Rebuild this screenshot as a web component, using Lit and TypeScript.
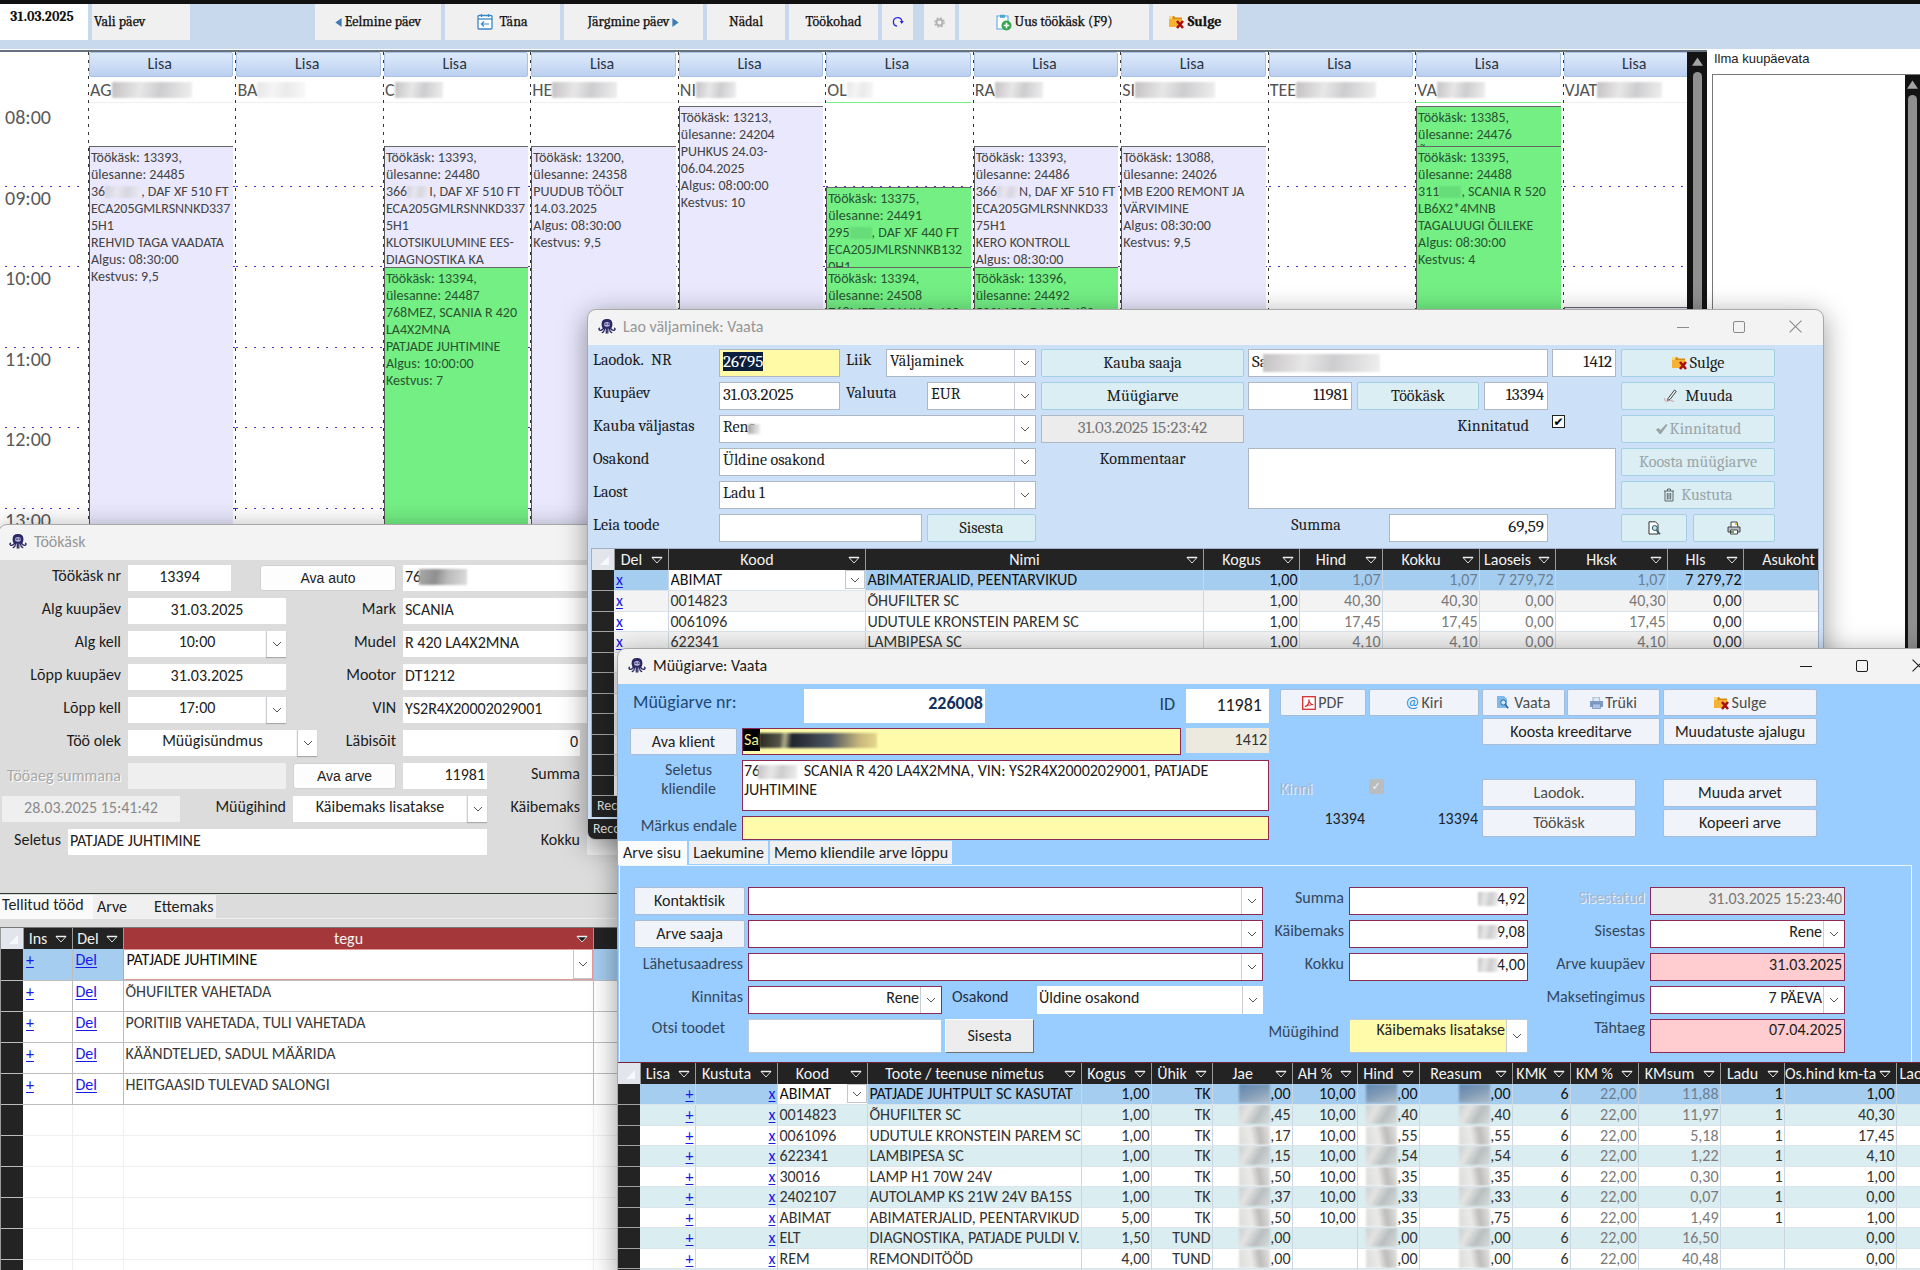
import { LitElement, html, css, nothing } from "lit";
import type { TemplateResult } from "lit";
import { customElement, property } from "lit/decorators.js";
import { classMap } from "lit/directives/class-map.js";

/* ---------- icons ---------- */

const folderClose = html`<svg viewBox="0 0 16 14" width="16" height="14" aria-hidden="true">
  <path d="M0 1h5l1.500 1.500H13V12H0z" fill="#d98a14" />
  <path d="M0 4h13v8H0z" fill="#f6b233" />
  <path d="M0 1h4l-1 3H0z" fill="#fbd777" />
  <path d="M8 6l6 7M14 6l-6 7" stroke="#a80f0f" stroke-width="2.600" />
</svg>`;

const chevron = html`<svg viewBox="0 0 10 6" width="10" height="6" aria-hidden="true">
  <path d="M1 1l4 4 4-4" fill="none" stroke="#555" stroke-width="1" />
</svg>`;

const filterMark = html`<svg viewBox="0 0 12 8" width="12" height="8" aria-hidden="true">
  <path d="M1 1.500h10L6 7z" fill="#1c1c1c" stroke="#dedede" stroke-width="1" />
  <path d="M1 1.500h10" stroke="#efefef" stroke-width="1.500" />
</svg>`;

const cornerMark = html`<svg viewBox="0 0 10 10" width="9" height="9" aria-hidden="true"><path d="M10 0v10H0z" fill="#f7f8fb" /></svg>`;

const calendarToday = html`<svg viewBox="0 0 16 16" width="16" height="16" aria-hidden="true">
  <rect x="1" y="1.500" width="14" height="13.500" rx="1" fill="#fff" stroke="#3b86c6" stroke-width="1.300" />
  <path d="M1 5h14" stroke="#3b86c6" stroke-width="1.300" />
  <path d="M4.500 0v3M11.500 0v3" stroke="#3b86c6" stroke-width="1.200" />
  <path d="M12 10H4.500M7 7.500L4.400 10 7 12.500" fill="none" stroke="#3b86c6" stroke-width="1.200" />
</svg>`;

const refresh = html`<svg viewBox="0 0 12 12" width="12" height="12" aria-hidden="true">
  <path d="M5 10.200A4.300 4.300 0 1 1 9.900 5" fill="none" stroke="#2a2ae0" stroke-width="1.300" />
  <path d="M7.600 5h4.200L9.800 8z" fill="#2a2ae0" />
</svg>`;

const gear = html`<svg viewBox="0 0 12 12" width="11" height="11" aria-hidden="true">
  <circle cx="6" cy="6" r="3.300" fill="none" stroke="#b3b3b3" stroke-width="2" />
  <circle cx="6" cy="6" r="5" fill="none" stroke="#b3b3b3" stroke-width="1.600" stroke-dasharray="2 1.930" />
</svg>`;

const clipboardAdd = html`<svg viewBox="0 0 16 17" width="16" height="17" aria-hidden="true">
  <rect x="1" y="2" width="11" height="13" fill="#fff" stroke="#4ba3d9" />
  <path d="M4 .800h5v3H4z" fill="#4ba3d9" />
  <circle cx="10.500" cy="11.500" r="5" fill="#33a64a" />
  <path d="M10.500 8.700v5.600M7.700 11.500h5.600" stroke="#fff" stroke-width="1.700" />
</svg>`;

const arrowLeft = html`<svg viewBox="0 0 7 10" width="7" height="9" aria-hidden="true"><path d="M7 0v10L0 5z" fill="#3f7cb5" /></svg>`;
const arrowRight = html`<svg viewBox="0 0 7 10" width="7" height="9" aria-hidden="true"><path d="M0 0v10l7-5z" fill="#3f7cb5" /></svg>`;

const scrollUp = html`<svg viewBox="0 0 12 9" width="11" height="9" aria-hidden="true"><path d="M6 0l6 9H0z" fill="#a5a5a5" /></svg>`;

const pencil = html`<svg viewBox="0 0 16 14" width="16" height="14" aria-hidden="true">
  <path d="M5 9.500L11.500 1l1.800 1.300L7 10.500l-2.500 1z" fill="#e9eef0" stroke="#444" stroke-width="1" />
  <path d="M2 9c-1.500 2.500 1 3.800 3 3s3-.5 6 .5" fill="none" stroke="#c89aa0" stroke-width="1" />
</svg>`;

const tickGray = html`<svg viewBox="0 0 14 12" width="13" height="12" aria-hidden="true"><path d="M1 6.500L4 4.800 6 7 12 .600l1.500 1L6.500 11.500H4.800z" fill="#9aa5a8" /></svg>`;

const bin = html`<svg viewBox="0 0 12 14" width="12" height="14" aria-hidden="true">
  <path d="M1 3h10M4.500 3V1h3v2M2 3v10h8V3M4.300 5v6.500M6 5v6.500M7.700 5v6.500" fill="none" stroke="#5d6669" stroke-width="1" />
</svg>`;

const preview = html`<svg viewBox="0 0 13 14" width="13" height="14" aria-hidden="true">
  <path d="M1 .800h6.500L10 3.300V13H1z" fill="#fff" stroke="#333" />
  <circle cx="6.800" cy="7" r="2.500" fill="#bfe3ec" stroke="#2d5560" />
  <path d="M8.500 9.200l3.500 4" stroke="#2d5560" stroke-width="1.600" />
</svg>`;

const printer = html`<svg viewBox="0 0 14 14" width="14" height="14" aria-hidden="true">
  <path d="M4 6V1h6l1 5" fill="#fff" stroke="#444" />
  <path d="M1 6h12v5H1z" fill="#b9bfc2" stroke="#444" />
  <path d="M3.500 9h7v4h-7z" fill="#fff" stroke="#444" />
  <path d="M8 2h2v2H8z" fill="#d9c23a" /><path d="M4 10h3v2H4z" fill="#57a957" />
</svg>`;

const pdf = html`<svg viewBox="0 0 14 14" width="14" height="14" aria-hidden="true">
  <rect x=".700" y=".700" width="12.600" height="12.600" fill="#fff" stroke="#d32f2f" stroke-width="1.300" />
  <path d="M3 10.800c2.500-1.300 4.200-4.600 4-7.600 0 3 1.600 5 4.200 5.600-3-.3-5.700.3-8.200 2z" fill="none" stroke="#d32f2f" stroke-width="1.100" />
</svg>`;

const docFind = html`<svg viewBox="0 0 12 13" width="12" height="13" aria-hidden="true">
  <path d="M0 0h7l3 3v9H0z" fill="#7db9ec" />
  <circle cx="6.300" cy="6.500" r="2.600" fill="#cfe7fa" stroke="#2f6699" />
  <path d="M8.200 8.500l3 3.800" stroke="#2f6699" stroke-width="1.500" />
</svg>`;

const printerBlue = html`<svg viewBox="0 0 13 12" width="13" height="12" aria-hidden="true">
  <path d="M3 4V0h6l1 4" fill="#dfeaf5" stroke="#8aa0bb" stroke-width=".8" />
  <path d="M0 4h13v6H0z" fill="#7e9ac4" /><path d="M2.500 7h8v4.500h-8z" fill="#a8c3e6" stroke="#6d8ab2" stroke-width=".7" />
</svg>`;

const octopus = html`<svg viewBox="0 0 20 16" width="18" height="15" aria-hidden="true">
  <path d="M10 .5c3.400 0 5.300 2.300 5.300 5.200 0 2-.9 3.400-1.600 4.300 1.400 1.700 2.400 2.600 3.900 2.300M10 .500C6.600.500 4.700 2.800 4.700 5.700c0 2 .9 3.400 1.600 4.300-1.400 1.700-2.400 2.600-3.900 2.300" fill="none" stroke="#26235f" stroke-width="1.500" />
  <path d="M10 .5c3.400 0 5.300 2.300 5.300 5.200 0 2.200-1.100 3.900-2.200 4.800H6.900C5.800 9.600 4.700 7.900 4.700 5.700 4.700 2.800 6.600.500 10 .500z" fill="#2c2968" />
  <path d="M7 4.200c1.800-1.500 4.200-1.500 6 0v3.300c-2 1-4 1-6 0z" fill="#b9b8da" />
  <path d="M8 5.400h1.700M10.800 5.400h1.700" stroke="#26235f" stroke-width="1.400" />
  <path d="M2.600 12.300C1 12.300.600 10.600 1.600 9.900M17.400 12.300c1.600 0 2-1.700 1-2.400M7.300 10.500c-.2 2.200-1 3.700-2.600 4.300M9.200 10.500v4.800M10.900 10.500v4.800M12.700 10.500c.2 2.200 1 3.700 2.600 4.300" fill="none" stroke="#26235f" stroke-width="1.400" stroke-linecap="round" />
</svg>`;

/* ---------- shared styles ---------- */

const base = css`
  * { box-sizing: border-box; }
  :host {
    display: block;
    font-family: Calibri, Carlito, "Liberation Sans", sans-serif;
    font-size: 16px;
    line-height: 20px;
    color: #222;
  }
  button, input, select, textarea { font: inherit; color: inherit; margin: 0; border-radius: 0; min-width: 0; }
  button {
    display: flex; align-items: center; justify-content: center; gap: 2px;
    padding: 0; white-space: nowrap;
  }
  input, textarea { border: 0; background: #fff; padding: 0 2px 4px; outline: 0; width: 100%; height: 100%; }
  textarea { display: block; resize: none; overflow: hidden; }
  label { white-space: nowrap; }
  .right, .right select { text-align: right; text-align-last: right; }
  .center, .center select { text-align: center; text-align-last: center; }
  .combo { display: grid; grid-template: 100% / minmax(0, 1fr) 21px; background: #fff; }
  .combo select {
    grid-area: 1 / 1 / 2 / 3; appearance: none; border: 0; background: transparent;
    width: 100%; height: 100%; padding: 0 22px 4px 2px; outline: 0;
  }
  .combo .drop {
    grid-area: 1 / 2; display: grid; place-items: center; pointer-events: none;
    border-left: 1px solid #c9ced4; background: #fff;
  }
  .masked { display: grid; grid-template: 100% / 100%; }
  .masked > * { grid-area: 1 / 1; }
  .smudge {
    display: inline-block; height: 16px; filter: blur(1px);
    background: linear-gradient(100deg, #c4c1c3, #e8e7e8 35%, #cdccce 60%, #efeff0);
  }
  table { border-collapse: collapse; table-layout: fixed; background: #fff; }
  th, td { padding: 0; overflow: hidden; white-space: nowrap; }
  th { height: 21px; background: #232323; color: #f2f2f2; font-weight: 400; border-right: 1px solid #9a9a9a; }
  .hc { display: flex; align-items: center; height: 20px; gap: 2px; padding-right: 5px; overflow: hidden; }
  .hc span { flex: 1; min-width: 0; text-align: center; overflow: hidden; }
  .hc.start span { text-align: left; padding-left: 3px; }
  .hc svg { flex: none; }
  th.corner { background: #e3e5ec; text-align: right; vertical-align: bottom; line-height: 10px; }
  td.sel { background: #232323; border-bottom: 1px solid #a2a2a2; }
  a { color: #1a1ae6; text-decoration: underline; text-underline-offset: 2px; }
  svg { display: block; flex: none; }
`;

const smudge = (cls: string) => html`<span class="smudge ${cls}"></span>`;

const combo = (id: string, value: string, cls = "") => html`
  <span class="combo ${cls}"><select id=${id} aria-label=${id}><option>${value}</option></select><span class="drop">${chevron}</span></span>`;

/* ---------- window frame ---------- */

@customElement("app-window")
export class AppWindow extends LitElement {
  @property() heading = "";
  @property({ type: Boolean, reflect: true }) active = false;

  static styles = [base, css`
    :host {
      background: #f3f3f3; border: 1px solid #a9a9a9; border-radius: 9px 9px 8px 8px; overflow: hidden;
      box-shadow: 0 6px 28px rgba(0, 0, 0, 0.4);
    }
    header { display: flex; align-items: center; height: 35px; padding: 0 0 2px 10px; color: #969696; }
    :host([active]) header { color: #1c1c1c; }
    h2 { flex: 1; margin: 0 0 0 7px; font-size: 16px; font-weight: 400; }
    header button { width: 56px; height: 33px; border: 0; background: transparent; }
    .ctl path, .ctl rect { stroke: #8a8a8a; fill: none; }
    :host([active]) .ctl path, :host([active]) .ctl rect { stroke: #1c1c1c; }
  `];

  render() {
    return html`
      <header>
        ${octopus}
        <h2>${this.heading}</h2>
        <button class="ctl" aria-label="Minimeeri"><svg viewBox="0 0 12 12" width="12" height="12"><path d="M0 6.500h12" /></svg></button>
        <button class="ctl" aria-label="Maksimeeri"><svg viewBox="0 0 12 12" width="12" height="12"><rect x=".5" y=".5" width="11" height="11" rx="1.500" /></svg></button>
        <button class="ctl" aria-label="Sulge aken"><svg viewBox="0 0 12 12" width="13" height="13"><path d="M.5.500l11 11M11.500.500l-11 11" /></svg></button>
      </header>
      <slot></slot>`;
  }
}

/* ---------- schedule ---------- */

interface Task { start: number; span: number; green?: boolean; lines: (string | TemplateResult)[]; }
interface Worker { name: string; mask: string; tail?: boolean; tasks: Task[]; }

const workers: Worker[] = [
  { name: "AG", mask: "m80", tasks: [{ start: 2, span: 12, lines: ["Töökäsk: 13393,", "ülesanne: 24485", html`36${smudge("plate")}, DAF XF 510 FT`, "ECA205GMLRSNNKD337", "5H1", "REHVID TAGA VAADATA", "Algus: 08:30:00", "Kestvus: 9,5"] }] },
  { name: "BA", mask: "m50 faint", tasks: [] },
  { name: "C", mask: "m50", tasks: [
    { start: 2, span: 3, lines: ["Töökäsk: 13393,", "ülesanne: 24480", html`366${smudge("plate short")}I, DAF XF 510 FT`, "ECA205GMLRSNNKD337", "5H1", "KLOTSIKULUMINE EES-", "DIAGNOSTIKA KA"] },
    { start: 5, span: 9, green: true, lines: ["Töökäsk: 13394,", "ülesanne: 24487", "768MEZ, SCANIA R 420", "LA4X2MNA", "PATJADE JUHTIMINE", "Algus: 10:00:00", "Kestvus: 7"] }] },
  { name: "HE", mask: "m65", tasks: [{ start: 2, span: 12, lines: ["Töökäsk: 13200,", "ülesanne: 24358", "PUUDUB TÖÖLT", "14.03.2025", "Algus: 08:30:00", "Kestvus: 9,5"] }] },
  { name: "NI", mask: "m40", tasks: [{ start: 1, span: 13, lines: ["Töökäsk: 13213,", "ülesanne: 24204", "PUHKUS 24.03-", "06.04.2025", "Algus: 08:00:00", "Kestvus: 10"] }] },
  { name: "OL", mask: "m25 faint", tail: true, tasks: [
    { start: 3, span: 2, green: true, lines: ["Töökäsk: 13375,", "ülesanne: 24491", html`295${smudge("plate short lime")}, DAF XF 440 FT`, "ECA205JMLRSNNKB132", "0H1"] },
    { start: 5, span: 9, green: true, lines: ["Töökäsk: 13394,", "ülesanne: 24508", "768MEZ, SCANIA R 420"] }] },
  { name: "RA", mask: "m50", tasks: [
    { start: 2, span: 3, lines: ["Töökäsk: 13393,", "ülesanne: 24486", html`366${smudge("plate short")}N, DAF XF 510 FT`, "ECA205GMLRSNNKD33", "75H1", "KERO KONTROLL", "Algus: 08:30:00"] },
    { start: 5, span: 9, green: true, lines: ["Töökäsk: 13396,", "ülesanne: 24492", "523MGP, DAF XF 480"] }] },
  { name: "SI", mask: "m80", tasks: [{ start: 2, span: 12, lines: ["Töökäsk: 13088,", "ülesanne: 24026", "MB E200 REMONT JA", "VÄRVIMINE", "Algus: 08:30:00", "Kestvus: 9,5"] }] },
  { name: "TEE", mask: "m80", tasks: [] },
  { name: "VA", mask: "m50", tail: true, tasks: [
    { start: 1, span: 1, green: true, lines: ["Töökäsk: 13385,", "ülesanne: 24476", "Õ"] },
    { start: 2, span: 8, green: true, lines: ["Töökäsk: 13395,", "ülesanne: 24488", html`311${smudge("plate short lime")}, SCANIA R 520`, "LB6X2*4MNB", "TAGALUUGI ÕLILEKE", "Algus: 08:30:00", "Kestvus: 4"] }] },
  { name: "VJAT", mask: "m65", tasks: [{ start: 6, span: 4, lines: [] }] },
];

@customElement("schedule-board")
export class ScheduleBoard extends LitElement {
  static styles = [base, css`
    :host { display: flex; flex-direction: column; height: 100%; background: #fff; }
    .strip { height: 4px; background: #111; }
    .bar {
      display: flex; height: 45px; background: #c8d9ee; padding-bottom: 9px; gap: 4px;
      font-family: Cambria, Caladea, "Liberation Serif", serif; font-size: 14px; color: #111;
    }
    .bar button { border: 0; background: #f0f0f0; gap: 3px; -webkit-text-stroke: 0.25px #111; }
    .date { width: 88px; background: #fff; text-align: center; font-weight: 700; padding: 0 4px 12px 0; }
    .w98 { width: 98px; } .w126 { width: 126px; } .w115 { width: 115px; } .w139 { width: 139px; }
    .w78 { width: 78px; } .w89 { width: 89px; } .w31 { width: 31px; } .w190 { width: 190px; } .w84 { width: 84px; }
    .bar .w98 { justify-content: flex-start; padding-left: 2px; }
    .bar .w126 { margin-left: 121px; }
    .bar .w115 { gap: 6px; }
    .bar .set { margin-left: 7px; }
    .bar .strong { font-weight: 700; }
    .main { flex: 1; display: flex; min-height: 0; }
    .cal { flex: 1; min-width: 0; display: flex; overflow: hidden; border-top: 2px solid #66727f; margin-top: 1px; }
    .hours {
      flex: none; width: 88px; padding: 54px 4px 0 5px; font-size: 20px; color: #5a5a5a;
      display: grid; grid-template-rows: repeat(3, 81px 80px); align-content: start; line-height: 22px;
    }
    .hours div, .slots {
      background: repeating-linear-gradient(90deg, #4434cc 0 2px, transparent 2px 9px) 0 100% / 100% 1px no-repeat;
    }
    .view { flex: 1; min-width: 0; overflow: hidden; }
    .cols { width: calc(100% + 23px); height: 100%; display: grid; grid-template-columns: repeat(11, 1fr); }
    .col {
      min-width: 0; display: flex; flex-direction: column; padding-left: 1px;
      background: repeating-linear-gradient(180deg, #333 0 3px, transparent 3px 8px) 0 0 / 1px 100% no-repeat;
    }
    .col > button {
      height: 25px; margin-right: 2px; border: 1px solid #a9c2e4; border-radius: 2px; color: #2b3542;
      background: linear-gradient(#dce9fb, #cfdff6 45%, #bacff0); padding: 0 3px 2px 0;
    }
    .name { height: 25px; font-size: 18px; line-height: 26px; color: #555; display: flex; align-items: center; padding-left: 1px; }
    .tail { height: 4px; margin-right: 2px; border-top: 1px solid #eee; }
    .tail.on { border-top-color: #73ef84; }
    .grid { display: grid; grid-template-rows: repeat(3, 40px 41px 40px 40px); margin-right: 2px; flex: 1; }
    .slots { grid-column: 1; height: 1px; align-self: end; margin-right: -2px; }
    .task {
      grid-column: 1; border-left: 1px solid #555; border-top: 1px solid #666; background: #e9e8fd; padding: 2px 0 0 1px;
      font-size: 14px; line-height: 17px; color: #444; overflow: hidden; min-height: 0; white-space: nowrap;
    }
    .task.green { background: #73ef84; color: #2a5531; }
    .plate { width: 36px; height: 12px; vertical-align: -2px; opacity: 0.6; }
    .short { width: 22px; }
    .lime { background: #5fd272; }
    .faint { opacity: 0.4; }
    .m80 { width: 80px; } .m65 { width: 65px; } .m50 { width: 48px; } .m40 { width: 40px; } .m25 { width: 26px; }
    .scroll { width: 20px; background: #131313; display: flex; flex-direction: column; align-items: center; gap: 6px; padding-top: 5px; }
    .thumb { flex: 1; width: 9px; border-radius: 5px 5px 0 0; background: #909090; }
    aside { width: 213px; display: flex; flex-direction: column; padding-left: 5px; }
    aside h3 { margin: 0; padding-left: 2px; height: 25px; font: 13px/20px "Liberation Sans", Arial, sans-serif; color: #222; }
    .list { flex: 1; display: flex; justify-content: flex-end; border-left: 1px solid #777; border-top: 1px solid #777; }
    .list .scroll { width: 15px; }
  `];

  private worker(w: Worker) {
    return html`<section class="col">
      <button>Lisa</button>
      <div class="name">${w.name}${smudge(w.mask)}</div>
      <div class=${classMap({ tail: true, on: !!w.tail })}></div>
      <div class="grid">
        ${[2, 4, 6, 8, 10].map((row) => html`<div class="slots" style="grid-row:${row}"></div>`)}
        ${w.tasks.map((t) => html`<article class=${classMap({ task: true, green: !!t.green })}
          style="grid-row:${t.start} / span ${Math.min(t.span, 13 - t.start)}">
          ${t.lines.map((l) => html`<div>${l}</div>`)}
        </article>`)}
      </div>
    </section>`;
  }

  render() {
    return html`
      <div class="strip"></div>
      <nav class="bar">
        <input class="date" aria-label="Kuupäev" .value=${"31.03.2025"} />
        <button class="w98">Vali päev</button>
        <button class="w126">${arrowLeft}Eelmine päev</button>
        <button class="w115">${calendarToday}Täna</button>
        <button class="w139">Järgmine päev${arrowRight}</button>
        <button class="w78">Nädal</button>
        <button class="w89">Töökohad</button>
        <button class="w31" aria-label="Värskenda">${refresh}</button>
        <button class="w31 set" aria-label="Seaded">${gear}</button>
        <button class="w190">${clipboardAdd}Uus töökäsk (F9)</button>
        <button class="w84 strong">${folderClose}Sulge</button>
      </nav>
      <div class="main">
        <div class="cal">
          <div class="hours">${["08:00", "09:00", "10:00", "11:00", "12:00", "13:00"].map((h) => html`<div>${h}</div>`)}</div>
          <div class="view"><div class="cols">${workers.map((w) => this.worker(w))}</div></div>
          <div class="scroll">${scrollUp}<div class="thumb"></div></div>
        </div>
        <aside>
          <h3>Ilma kuupäevata</h3>
          <div class="list"><div class="scroll">${scrollUp}<div class="thumb"></div></div></div>
        </aside>
      </div>`;
  }
}

/* ---------- data grid ---------- */

interface Column {
  title: string; width: number; align?: "right"; dim?: boolean; link?: boolean; mask?: boolean;
  pick?: boolean; accent?: boolean; plain?: boolean; start?: boolean;
}

@customElement("data-grid")
export class DataGrid extends LitElement {
  @property({ attribute: false }) columns: Column[] = [];
  @property({ attribute: false }) rows: string[][] = [];
  @property({ type: Number }) blanks = 0;
  @property() tone = "";

  static styles = [base, css`
    :host { background: #fff; overflow: hidden; }
    tr.odd { height: 20px; } tr.even { height: 21px; }
    td { border-right: 1px solid #ccd6e2; line-height: 19px; padding: 0 1px 0 2px; color: #333; border-bottom: 1px solid #dde3ea; }
    td.sel { border-right: 0; }
    td.r { text-align: right; }
    td.dim { color: #7a7a7a; }
    .gray tr.even td:not(.sel) { background: #f3f3f3; }
    .aqua tr.even td:not(.sel) { background: #daedf1; }
    tr.cur td:not(.sel) { background: #a5cdf0; color: #111; }
    tr.cur td.dim:not(.sel) { color: #6b7f93; }
    tr td.pick.pick { padding: 0; }
    tr.cur td.pick.pick { background: #fff; }
    td.pick > span.t { padding-left: 2px; }
    .combo { height: 19px; grid-template-columns: minmax(0, 1fr) 20px; }
    .combo select { padding: 0 20px 0 2px; }
    .combo .drop { border: 1px solid #c4c8cc; }
    .smudge { width: 31px; height: 19px; vertical-align: top; background: linear-gradient(120deg, #c9cfd2, #e4e4e2 30%, #b9bfc0 60%, #d8dcdc); }
    tr.odd .smudge { background: linear-gradient(80deg, #dcdcdb, #eaeae8 40%, #bdbcbb 65%, #e4e4e3); }
    tr.cur.odd .smudge { background: linear-gradient(160deg, #5f86b3, #7e99b5 45%, #b3c0cb); }
    .tall tr.odd, .tall tr.even { height: 31px; }
    .tall td { vertical-align: top; line-height: 22px; border-color: #bdbdbd; padding-left: 3px; color: #3a3a3a; }
    .tall tr.blank td:not(.sel) { border-color: #efefef; }
    .tall th.accent { background: #a4373a; }
    .tall tr.cur td.pick { outline: 1px solid #e59a9a; outline-offset: -1px; }
    .tall .combo { height: 30px; }
    .tall .combo select { padding: 0 20px 8px 3px; }
  `];

  private cell(c: Column, v: string, current: boolean) {
    const cls = classMap({ r: c.align === "right", dim: !!c.dim, pick: !!c.pick });
    if (c.link) return html`<td class=${cls}><a href="#">${v}</a></td>`;
    if (c.pick && current) return html`<td class=${cls}>${combo(c.title, v)}</td>`;
    if (c.mask) return html`<td class=${cls}>${smudge("")}${v}</td>`;
    return html`<td class=${cls}>${c.pick ? html`<span class="t">${v}</span>` : v}</td>`;
  }

  render() {
    const total = this.columns.reduce((s, c) => s + c.width, 22);
    const blanks = Array.from({ length: this.blanks }, (_, i) => i + this.rows.length);
    const parity = (i: number) => (i % 2 ? "even" : "odd");
    return html`<table class=${this.tone} style="width:${total}px">
      <colgroup><col style="width:22px" />${this.columns.map((c) => html`<col style="width:${c.width}px" />`)}</colgroup>
      <thead><tr><th class="corner"><div class="hc"><span></span>${cornerMark}</div></th>${this.columns.map((c) => html`
        <th class=${c.accent ? "accent" : ""}><div class="hc ${c.start ? "start" : ""}"><span>${c.title}</span>${c.plain ? nothing : filterMark}</div></th>`)}</tr></thead>
      <tbody>
        ${this.rows.map((r, i) => html`<tr class="${parity(i)} ${i === 0 ? "cur" : ""}"><td class="sel"></td>${this.columns.map((c, k) => this.cell(c, r[k] ?? "", i === 0))}</tr>`)}
        ${blanks.map((i) => html`<tr class="${parity(i)} blank"><td class="sel"></td>${this.columns.map(() => html`<td></td>`)}</tr>`)}
      </tbody>
    </table>`;
  }
}

/* ---------- work order ---------- */

@customElement("work-order")
export class WorkOrder extends LitElement {
  static styles = [base, css`
    :host { background: #dcdcdc; height: 100%; }
    .form { width: 700px; padding: 5px 0 0; display: flex; flex-direction: column; gap: 7px; }
    .row { display: flex; height: 26px; gap: 7px; }
    .row > label { line-height: 22px; color: #1c1c1c; text-align: right; }
    .lead { width: 122px; }
    .push { margin-left: auto; }
    .row > input, .row > .combo, .row > .masked, .row > button { flex: none; }
    .w103 { width: 103px; } .w158 { width: 158px; } .w189 { width: 189px; } .w136 { width: 136px; }
    .w296 { width: 296px; } .w177 { width: 177px; } .w84 { width: 84px; } .w112 { width: 112px; }
    .w178 { width: 178px; } .w194 { width: 194px; } .w419 { width: 419px; } .w86 { width: 86px; }
    .combo { grid-template-columns: minmax(0, 1fr) 20px; }
    .combo .drop { box-shadow: 0 1px 1px #aaa; }
    button { background: #fdfdfd; border: 1px solid #d0d0d0; border-radius: 3px; font: 14px/20px "Liberation Sans", Arial, sans-serif; }
    .off { background: #efefef; color: #8a8a8a; }
    .row > label.emboss { color: #a8a8a8; text-shadow: 1px 1px 0 #fff; line-height: 26px; }
    .pad { margin-right: 119px; }
    .start { padding-left: 3px; }
    .seletus { width: 62px; }
    .plate { width: 48px; margin: 4px 0 0 16px; background: linear-gradient(100deg, #aaa, #8f8f8f 35%, #bbb 60%, #ddd); }
    .tabs { margin-top: 38px; border-top: 1px solid #2e3a2e; padding-top: 1px; display: flex; height: 26px; border-bottom: 1px solid #eee; }
    .tabs button { border: 0; border-radius: 0; background: #f0f0f0; justify-content: flex-start; font: inherit; height: 24px; padding-left: 4px; }
    .tabs .on { background: #fafafa; padding: 0 0 4px 3px; width: 94px; }
    .tabs .t2 { width: 56px; } .tabs .t3 { width: 67px; padding-left: 5px; }
    data-grid { margin: 8px 0 0; border-left: 2px solid #9a9a9a; border-top: 1px solid #777; }
  `];

  private columns: Column[] = [
    { title: "Ins", width: 49, link: true }, { title: "Del", width: 51, link: true },
    { title: "tegu", width: 470, accent: true, pick: true }, { title: "", width: 400, plain: true },
  ];
  private rows = ["PATJADE JUHTIMINE", "ÕHUFILTER VAHETADA", "PORITIIB VAHETADA, TULI VAHETADA", "KÄÄNDTELJED, SADUL MÄÄRIDA", "HEITGAASID TULEVAD SALONGI"].map((t) => ["+", "Del", t, ""]);

  render() {
    return html`
      <form class="form">
        <div class="row"><label class="lead" for="nr">Töökäsk nr</label><input id="nr" class="w103 center" .value=${"13394"} />
          <button type="button" class="w136 push">Ava auto</button><span class="masked w296"><input aria-label="Auto" .value=${"76"} />${smudge("plate")}</span></div>
        <div class="row"><label class="lead" for="d1">Alg kuupäev</label><input id="d1" class="w158 center" .value=${"31.03.2025"} />
          <label class="push" for="mark">Mark</label><input id="mark" class="w296" .value=${"SCANIA"} /></div>
        <div class="row"><label class="lead" for="t1">Alg kell</label>${combo("t1", "10:00", "w158 center")}
          <label class="push" for="mudel">Mudel</label><input id="mudel" class="w296" .value=${"R 420 LA4X2MNA"} /></div>
        <div class="row"><label class="lead" for="d2">Lõpp kuupäev</label><input id="d2" class="w158 center" .value=${"31.03.2025"} />
          <label class="push" for="mootor">Mootor</label><input id="mootor" class="w296" .value=${"DT1212"} /></div>
        <div class="row"><label class="lead" for="t2">Lõpp kell</label>${combo("t2", "17:00", "w158 center")}
          <label class="push" for="vin">VIN</label><input id="vin" class="w296" .value=${"YS2R4X20002029001"} /></div>
        <div class="row"><label class="lead" for="olek">Töö olek</label>${combo("olek", "Müügisündmus", "w189 center")}
          <label class="push" for="km">Läbisõit</label><input id="km" class="w177 right pad" .value=${"0"} /></div>
        <div class="row"><label class="lead emboss" for="aeg">Tööaeg summana</label><input id="aeg" class="w158 off" disabled />
          <button type="button" class="w103">Ava arve</button><input class="w84 right" aria-label="Arve" .value=${"11981"} />
          <label class="w86" for="summa">Summa</label><input id="summa" class="w112 off" disabled /></div>
        <div class="row start"><input class="w178 off center" aria-label="Sisestatud" disabled .value=${"28.03.2025 15:41:42"} />
          <label class="push" for="hind">Müügihind</label>${combo("hind", "Käibemaks lisatakse", "w194 center")}
          <label class="w86" for="kaibe">Käibemaks</label><input id="kaibe" class="w112 off" disabled /></div>
        <div class="row"><label class="seletus" for="sel">Seletus</label><input id="sel" class="w419" .value=${"PATJADE JUHTIMINE"} />
          <label class="w86" for="kokku">Kokku</label><input id="kokku" class="w112 off" disabled /></div>
      </form>
      <div class="tabs" role="tablist"><button class="on" role="tab">Tellitud tööd</button><button class="t2" role="tab">Arve</button><button class="t3" role="tab">Ettemaks</button></div>
      <data-grid tone="tall" .columns=${this.columns} .rows=${this.rows} .blanks=${7}></data-grid>`;
  }
}

/* ---------- stock issue ---------- */

@customElement("stock-issue")
export class StockIssue extends LitElement {
  static styles = [base, css`
    :host { background: #cce0f8; }
    .form {
      display: flex; gap: 5px; padding: 4px 0 6px 5px; color: #1a1a1a;
      font-family: Cambria, Caladea, "Liberation Serif", serif;
    }
    .a { width: 443px; display: flex; flex-direction: column; gap: 5px; }
    .row { display: flex; height: 28px; gap: 5px; }
    .row > label { line-height: 22px; }
    .lead { width: 121px; }
    .row > label.mid { flex: 1; padding-left: 1px; text-align: left; }
    input, textarea, .combo { border: 1px solid #aeb8c4; }
    input, .combo select { padding: 0 3px 4px 3px; }
    .combo select { padding-right: 22px; }
    input { font-size: 17px; }
    .w121 { width: 121px; } .w150 { width: 150px; } .w109 { width: 109px; }
    .row > input, .row > .combo { flex: none; } .row > .fill { flex: 1; }
    .fill { flex: 1; min-width: 0; }
    input.key { background: #fffaa6; }
    input.key::selection { background: #0b1f3c; color: #fff; }
    .b { width: 575px; display: grid; grid-template-columns: 203px 300px 64px; grid-template-rows: repeat(6, 28px); column-gap: 4px; row-gap: 5px; }
    .b label { line-height: 22px; }
    .b .cell { display: flex; gap: 5px; }
    .w104 { width: 104px; flex: none; } .w64 { width: 64px; flex: none; } .w159 { width: 159px; flex: none; }
    .kin { text-align: right; padding-right: 19px; }
    .memo { grid-column: 2 / 4; grid-row: 4 / 6; }
    .mid { text-align: center; }
    input[type="checkbox"] {
      appearance: none; width: 13px; height: 13px; border: 1px solid #222; padding: 0; display: grid; place-items: center;
    }
    input[type="checkbox"]::before { content: "✔"; font: 12px/12px "DejaVu Sans", sans-serif; color: #000; }
    button { background: #daeef3; border: 1px solid #a3cfe3; border-radius: 2px; color: #1a1a1a; }
    button:disabled { color: #9aa5a8; }
    .gray { background: #ececec; color: #777; }
    .c { width: 154px; display: flex; flex-direction: column; gap: 5px; }
    .c button { height: 28px; flex: none; } .c .two { display: flex; gap: 6px; }
    .c .two button:first-child { width: 66px; } .c .two button:last-child { width: 82px; }
    .c .wide { gap: 6px; }
    .patch { width: 117px; height: 18px; margin: 5px 0 0 15px; }
    .patch2 { width: 12px; height: 10px; margin: 9px 0 0 29px; background: linear-gradient(90deg, #aaa, #eee); }
    .sheet { margin: 0 4px 0 3px; border: 1px solid #9fb1c6; border-bottom: 0; }
    .rec { background: #232323; color: #ddd; font-size: 14px; height: 21px; line-height: 20px; padding-left: 5px; }
    .outer { margin-top: 2px; height: 20px; }
  `];

  private columns: Column[] = [
    { title: "Del", width: 54, link: true }, { title: "Kood", width: 197, pick: true }, { title: "Nimi", width: 338 },
    { title: "Kogus", width: 96, align: "right" }, { title: "Hind", width: 83, align: "right", dim: true },
    { title: "Kokku", width: 97, align: "right", dim: true }, { title: "Laoseis", width: 76, align: "right", dim: true },
    { title: "Hksk", width: 112, align: "right", dim: true }, { title: "Hls", width: 76, align: "right" },
    { title: "Asukoht", width: 96, plain: true },
  ];
  private rows = [
    ["x", "ABIMAT", "ABIMATERJALID, PEENTARVIKUD", "1,00", "1,07", "1,07", "7 279,72", "1,07", "7 279,72", ""],
    ["x", "0014823", "ÕHUFILTER SC", "1,00", "40,30", "40,30", "0,00", "40,30", "0,00", ""],
    ["x", "0061096", "UDUTULE KRONSTEIN PAREM SC", "1,00", "17,45", "17,45", "0,00", "17,45", "0,00", ""],
    ["x", "622341", "LAMBIPESA SC", "1,00", "4,10", "4,10", "0,00", "4,10", "0,00", ""],
  ];

  firstUpdated() {
    const key = this.renderRoot.querySelector<HTMLInputElement>("#laodok");
    key?.focus();
    key?.select();
  }

  render() {
    return html`
      <form class="form">
        <div class="a">
          <div class="row"><label class="lead" for="laodok">Laodok.&nbsp; NR</label><input id="laodok" class="w121 key" .value=${"26795"} />
            <label class="mid" for="liik">Liik</label>${combo("liik", "Väljaminek", "w150")}</div>
          <div class="row"><label class="lead" for="kp">Kuupäev</label><input id="kp" class="w121" .value=${"31.03.2025"} />
            <label class="mid" for="val">Valuuta</label>${combo("val", "EUR", "w109")}</div>
          <div class="row"><label class="lead" for="valj">Kauba väljastas</label><span class="masked fill">${combo("valj", "Rene")}${smudge("patch2")}</span></div>
          <div class="row"><label class="lead" for="osak">Osakond</label>${combo("osak", "Üldine osakond", "fill")}</div>
          <div class="row"><label class="lead" for="laost">Laost</label>${combo("laost", "Ladu 1", "fill")}</div>
          <div class="row"><label class="lead" for="leia">Leia toode</label><input id="leia" class="fill" /><button type="button" class="w109">Sisesta</button></div>
        </div>
        <div class="b">
          <button type="button">Kauba saaja</button>
          <span class="masked"><input aria-label="Kauba saaja" .value=${"Sa"} />${smudge("patch")}</span>
          <input class="right" aria-label="Kliendi ID" .value=${"1412"} />
          <button type="button">Müügiarve</button>
          <div class="cell"><input class="w104 right" aria-label="Müügiarve" .value=${"11981"} /><button type="button" class="fill">Töökäsk</button><input class="w64 right" aria-label="Töökäsk" .value=${"13394"} /></div>
          <span></span>
          <input class="gray center" aria-label="Aeg" disabled .value=${"31.03.2025 15:23:42"} />
          <label class="kin" for="kinni">Kinnitatud</label><input type="checkbox" id="kinni" checked />
          <label class="mid" for="memo">Kommentaar</label><textarea class="memo" id="memo"></textarea>
          <span></span><span></span>
          <div class="cell"><label class="mid fill" for="sum">Summa</label><input id="sum" class="w159 right" .value=${"69,59"} /></div>
        </div>
        <div class="c">
          <button type="button">${folderClose}Sulge</button>
          <button type="button" class="wide">${pencil}Muuda</button>
          <button type="button" disabled>${tickGray}Kinnitatud</button>
          <button type="button" disabled>Koosta müügiarve</button>
          <button type="button" class="wide" disabled>${bin}Kustuta</button>
          <div class="two"><button type="button" aria-label="Eelvaade">${preview}</button><button type="button" aria-label="Prindi">${printer}</button></div>
        </div>
      </form>
      <div class="sheet">
        <data-grid tone="gray" .columns=${this.columns} .rows=${this.rows} .blanks=${7}></data-grid>
        <div class="rec">Record:</div>
      </div>
      <div class="rec outer">Record:</div>`;
  }
}

/* ---------- sales invoice ---------- */

@customElement("sales-invoice")
export class SalesInvoice extends LitElement {
  static styles = [base, css`
    :host { background: #99ccff; height: 100%; }
    .head { display: flex; gap: 11px; padding: 5px 0 1px 12px; }
    .a { display: grid; grid-template-columns: 107px 439px 83px; grid-template-rows: 34px 27px 51px 24px; gap: 5px; color: #24405e; }
    .a input, .a textarea, .page input { color: #1c1c1c; }
    button { background: #f0f4fa; border: 1px solid #a9bcd6; border-radius: 2px; color: #222; }
    .big { font-size: 18px; }
    .a label.big { line-height: 26px; padding-left: 3px; color: #1d4a78; }
    .top { display: flex; justify-content: space-between; padding-left: 62px; }
    .top input { width: 181px; padding-bottom: 6px; }
    .top label.big { padding: 2px 6px 0 0; color: #24405e; }
    .a input.nr { font-weight: 700; color: #12305e; }
    .a input.id { padding-right: 7px; padding-bottom: 2px; }
    .line { border: 1px solid #8b2a55; }
    .yellow { background: #fffbaa; }
    .a input.beige { background: #ece9df; height: 25px; color: #333; padding-bottom: 2px; }
    .two-line { white-space: normal; text-align: center; line-height: 19px; padding-left: 10px; color: #33475c; }
    .wide { grid-column: 2 / 4; }
    .a textarea { line-height: 19px; padding-left: 1px; }
    .mark { text-align: right; color: #33475c; }
    .b { display: grid; grid-template-columns: 86px 110px 178px 154px; grid-template-rows: 27px 27px 30px 28px 28px; column-gap: 3px; row-gap: 2px; }
    .pair { display: flex; gap: 2px; } .pair button:first-child { width: 83px; } .pair button:last-child { flex: 1; }
    .c3 { grid-column: 3; } .c4 { grid-column: 4; } .r4 { grid-row: 4; } .r5 { grid-row: 5; }
    .narrow { width: 154px; } .dim { color: #4d4d4d; }
    .at { color: #1f8ae0; }
    .b .emboss, .page .emboss { color: #a9b6c6; text-shadow: 1px 1px 0 #e6f2ff; }
    .b input { padding: 0 1px 0 0; background: transparent; height: 20px; }
    .b input[type="checkbox"] {
      appearance: none; width: 15px; height: 15px; border-radius: 2px; background: #b9bdbf; display: grid; place-items: center;
    }
    .b input[type="checkbox"]::before { content: "✓"; font: 11px/14px "DejaVu Sans", sans-serif; color: #f3f3f3; }
    .tabs { display: flex; gap: 2px; height: 24px; }
    .tabs button { border: 0; border-radius: 0; background: #eff0f1; padding: 0 4px 0 4px; height: 23px; }
    .tabs .on { background: #fafbfc; padding: 0 6px 1px 5px; height: 24px; }
    .page {
      margin: 0 34px 0 1px; border: 1px solid #eef6ff; border-bottom: 0; padding: 21px 0 9px 14px;
      display: grid; grid-template-columns: 111px 194px 89px 226px 80px 179px 116px 195px; grid-template-rows: repeat(4, 28px) 34px;
      column-gap: 3px; row-gap: 5px;
    }
    .page label { line-height: 21px; color: #33475c; text-align: right; padding-right: 2px; }
    .page label.left { text-align: left; padding-left: 7px; color: #1e2f42; }
    .page .low { line-height: 18px; }
    .page .long { grid-column: 2 / 5; }
    .page .otsi { padding-right: 20px; }
    .page .s1 { grid-column: 5; } .page .s2 { grid-column: 7; }
    .pink { background: #ffcccf; }
    .page input.gray { background: #ececec; color: #777; }
    .page input { padding-bottom: 6px; }
    .page .last, .page .last select { padding-bottom: 14px; }
    .page span.last { padding-bottom: 0; }
    .flat { border: 1px solid #bcc9d8; }
    .page .down { padding-top: 2px; padding-right: 7px; }
    .raised { border: 1px solid; border-color: #fff #6f6f6f #6f6f6f #fff; background: #ededed; border-radius: 0; }
    .patch { width: 39px; margin: 5px 0 0 16px; height: 14px; }
    .dark { width: 118px; margin: 5px 0 0 17px; height: 15px; background: linear-gradient(95deg, #2a2a20, #55564a 18%, #b3b08a 22%, #20242e 28%, #4c5560 60%, #c9b77c 85%, #e6d98e); }
    .sm { width: 20px; height: 14px; justify-self: end; margin: 5px 30px 0 0; }
    .hl { align-self: start; justify-self: start; background: #000; color: #f5ee90; line-height: 22px; margin: 1px 0 0 1px; padding: 0 1px; }
    data-grid { border-top: 1px solid #7c2038; width: 1340px; }
  `];

  private columns: Column[] = [
    { title: "Lisa", width: 55, link: true, align: "right" }, { title: "Kustuta", width: 82, link: true, align: "right" },
    { title: "Kood", width: 90, pick: true }, { title: "Toote / teenuse nimetus", width: 214 },
    { title: "Kogus", width: 70, align: "right" }, { title: "Ühik", width: 61, align: "right" },
    { title: "Jae", width: 80, align: "right", mask: true }, { title: "AH %", width: 65, align: "right" },
    { title: "Hind", width: 62, align: "right", mask: true }, { title: "Reasum", width: 93, align: "right", mask: true },
    { title: "KMK", width: 58, align: "right" }, { title: "KM %", width: 68, align: "right", dim: true },
    { title: "KMsum", width: 82, align: "right", dim: true }, { title: "Ladu", width: 64, align: "right" },
    { title: "Os.hind km-ta", width: 112, align: "right" }, { title: "Lao", width: 60, plain: true, start: true },
  ];
  private rows = [
    ["+", "x", "ABIMAT", "PATJADE JUHTPULT SC KASUTAT", "1,00", "TK", ",00", "10,00", ",00", ",00", "6", "22,00", "11,88", "1", "1,00"],
    ["+", "x", "0014823", "ÕHUFILTER SC", "1,00", "TK", ",45", "10,00", ",40", ",40", "6", "22,00", "11,97", "1", "40,30"],
    ["+", "x", "0061096", "UDUTULE KRONSTEIN PAREM SC", "1,00", "TK", ",17", "10,00", ",55", ",55", "6", "22,00", "5,18", "1", "17,45"],
    ["+", "x", "622341", "LAMBIPESA SC", "1,00", "TK", ",15", "10,00", ",54", ",54", "6", "22,00", "1,22", "1", "4,10"],
    ["+", "x", "30016", "LAMP H1 70W 24V", "1,00", "TK", ",50", "10,00", ",35", ",35", "6", "22,00", "0,30", "1", "1,00"],
    ["+", "x", "2402107", "AUTOLAMP KS 21W 24V BA15S", "1,00", "TK", ",37", "10,00", ",33", ",33", "6", "22,00", "0,07", "1", "0,00"],
    ["+", "x", "ABIMAT", "ABIMATERJALID, PEENTARVIKUD", "5,00", "TK", ",50", "10,00", ",35", ",75", "6", "22,00", "1,49", "1", "1,00"],
    ["+", "x", "ELT", "DIAGNOSTIKA, PATJADE PULDI V.", "1,50", "TUND", ",00", "", ",00", ",00", "6", "22,00", "16,50", "", "0,00"],
    ["+", "x", "REM", "REMONDITÖÖD", "4,00", "TUND", ",00", "", ",00", ",00", "6", "22,00", "40,48", "", "0,00"],
  ];

  render() {
    const note = "76" + "\u00a0".repeat(12) + "SCANIA R 420 LA4X2MNA, VIN: YS2R4X20002029001, PATJADE JUHTIMINE";
    return html`
      <div class="head">
        <div class="a">
          <label class="big" for="arve">Müügiarve nr:</label>
          <div class="top"><input id="arve" class="big nr right" .value=${"226008"} /><label class="big" for="aid">ID</label></div>
          <input id="aid" class="big id right" .value=${"11981"} />
          <button>Ava klient</button>
          <span class="masked"><input class="line yellow" aria-label="Klient" /><span class="hl">Sa</span>${smudge("dark")}</span>
          <input class="beige right" aria-label="Kliendi ID" .value=${"1412"} />
          <label class="two-line" for="note">Seletus kliendile</label>
          <span class="masked wide"><textarea id="note" class="line" .value=${note}></textarea>${smudge("patch")}</span>
          <label class="mark" for="own">Märkus endale</label><input id="own" class="line yellow wide" />
        </div>
        <div class="b">
          <button class="dim">${pdf}PDF</button>
          <button class="dim"><span class="at">@</span>Kiri</button>
          <div class="pair"><button class="dim">${docFind}&nbsp;Vaata</button><button class="dim">${printerBlue}Trüki</button></div>
          <button class="dim">${folderClose}Sulge</button>
          <button class="c3">Koosta kreeditarve</button><button class="c4">Muudatuste ajalugu</button>
          <label class="emboss r4" for="lock">Kinni</label><input class="r4" type="checkbox" id="lock" checked disabled />
          <button class="c3 r4 narrow dim">Laodok.</button><button class="c4 r4">Muuda arvet</button>
          <input class="r5 right" aria-label="Töökäsk 1" .value=${"13394"} /><input class="r5 right" aria-label="Töökäsk 2" .value=${"13394"} />
          <button class="c3 r5 narrow dim">Töökäsk</button><button class="c4 r5">Kopeeri arve</button>
        </div>
      </div>
      <div class="tabs" role="tablist"><button class="on" role="tab">Arve sisu</button><button role="tab">Laekumine</button><button role="tab">Memo kliendile arve lõppu</button></div>
      <div class="page">
        <button>Kontaktisik</button>${combo("kontakt", "", "long line")}
        <label class="s1" for="s1">Summa</label><span class="masked"><input id="s1" class="line right" .value=${"4,92"} />${smudge("sm")}</span>
        <label for="sis" class="emboss">Sisestatud</label><input id="sis" class="line gray right" disabled .value=${"31.03.2025 15:23:40"} />

        <button>Arve saaja</button>${combo("saaja", "", "long line")}
        <label class="s1" for="s2">Käibemaks</label><span class="masked"><input id="s2" class="line right" .value=${"9,08"} />${smudge("sm")}</span>
        <label for="sisestas">Sisestas</label>${combo("sisestas", "Rene", "line right")}

        <label for="aadress">Lähetusaadress</label>${combo("aadress", "", "long line")}
        <label class="s1" for="s3">Kokku</label><span class="masked"><input id="s3" class="line right" .value=${"4,00"} />${smudge("sm")}</span>
        <label for="akp">Arve kuupäev</label><input id="akp" class="line pink right" .value=${"31.03.2025"} />

        <label for="kinnitas">Kinnitas</label>${combo("kinnitas", "Rene", "line right")}
        <label class="left" for="osakond">Osakond</label>${combo("osakond", "Üldine osakond")}
        <label class="s2" for="tingimus">Maksetingimus</label>${combo("tingimus", "7 PÄEVA", "line right")}

        <label class="otsi low" for="otsi">Otsi toodet</label><input id="otsi" class="flat" /><button class="raised">Sisesta</button>
        <label class="s1 down" for="hind">Müügihind</label>${combo("hind", "Käibemaks lisatakse", "yellow right last flat")}
        <label class="low" for="tahtaeg">Tähtaeg</label><input id="tahtaeg" class="line pink right last" .value=${"07.04.2025"} />
      </div>
      <data-grid tone="aqua" .columns=${this.columns} .rows=${this.rows} .blanks=${1}></data-grid>`;
  }
}

/* ---------- desktop ---------- */

@customElement("app-root")
export class AppRoot extends LitElement {
  static styles = css`
    :host { display: block; position: relative; height: 100vh; overflow: hidden; background: #fff; }
    app-window { position: absolute; }
    .order { left: -2px; top: 524px; width: 1000px; bottom: -10px; }
    .stock { left: 587px; top: 309px; width: 1235px; }
    .invoice { left: 617px; top: 648px; width: 1328px; bottom: -10px; }
  `;

  render() {
    return html`
      <schedule-board></schedule-board>
      <app-window class="order" heading="Töökäsk"><work-order></work-order></app-window>
      <app-window class="stock" heading="Lao väljaminek: Vaata"><stock-issue></stock-issue></app-window>
      <app-window class="invoice" heading="Müügiarve: Vaata" active><sales-invoice></sales-invoice></app-window>`;
  }
}
